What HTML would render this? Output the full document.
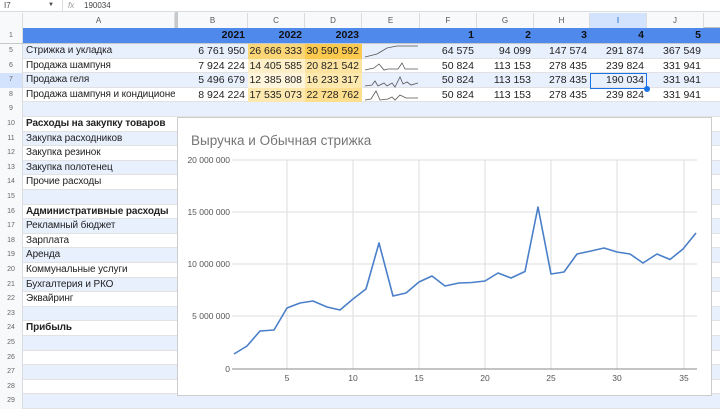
<!DOCTYPE html><html><head><meta charset="utf-8"><style>
*{margin:0;padding:0;box-sizing:border-box}
body{width:720px;height:403px;overflow:hidden;background:#fff;font-family:"Liberation Sans",Arial,sans-serif;position:relative;font-size:10.5px;color:#222}
.a{position:absolute}
.ch{position:absolute;top:13px;height:15px;font-size:8px;color:#555;text-align:center;line-height:15px;border-right:1px solid #dadce0;background:#f8f9fa}
.rn{position:absolute;left:0;width:23px;font-size:7px;color:#666;text-align:center;border-right:1px solid #dadce0}
.n{position:absolute;text-align:right;padding-right:3px;font-size:10.5px;white-space:nowrap}
</style></head><body>
<div class="a" style="left:0;top:0;width:720px;height:12px;border-bottom:1px solid #dadce0;font-size:8px;color:#444;line-height:11px">
<span class="a" style="left:4px;top:0">I7</span><span class="a" style="left:48px;top:0;font-size:6px">▼</span>
<span class="a" style="left:62px;top:-1px;width:1px;height:12px;background:#ddd"></span>
<span class="a" style="left:68px;top:0;color:#999;font-style:italic">fx</span><span class="a" style="left:84px;top:0">190034</span></div>
<div class="a" style="left:0;top:12px;width:720px;height:16px;background:#f8f9fa;border-bottom:1px solid #c0c0c0"></div>
<div class="ch" style="left:0;width:23px"></div>
<div class="ch" style="left:23px;width:152px">A</div>
<div class="a" style="left:175px;top:12px;width:3px;height:391px;background:#c6c9cc"></div>
<div class="ch" style="left:178px;width:70px">B</div>
<div class="ch" style="left:248px;width:57px">C</div>
<div class="ch" style="left:305px;width:57px">D</div>
<div class="ch" style="left:362px;width:58px">E</div>
<div class="ch" style="left:420px;width:57px">F</div>
<div class="ch" style="left:477px;width:57px">G</div>
<div class="ch" style="left:534px;width:56px">H</div>
<div class="ch" style="left:590px;width:57px;background:#d3e3fd;color:#0b57d0">I</div>
<div class="ch" style="left:647px;width:57px">J</div>
<!-- row 1 -->
<div class="a" style="left:23px;top:28px;width:697px;height:15px;background:#5089ec"></div>
<div class="a" style="left:0;top:43px;width:720px;height:2px;background:#c6c9cc"></div>
<div class="rn" style="top:28px;height:15px;line-height:15px;background:#f8f9fa">1</div>
<div id="rows"></div>
<div class="a" style="left:23px;top:28px;width:697px;height:15px;font-weight:bold;font-size:10.5px;line-height:15px;color:#111">
<span class="n" style="left:155px;width:70px">2021</span><span class="n" style="left:225px;width:57px">2022</span><span class="n" style="left:282px;width:57px">2023</span>
<span class="n" style="left:397px;width:57px">1</span><span class="n" style="left:454px;width:57px">2</span><span class="n" style="left:511px;width:56px">3</span><span class="n" style="left:567px;width:57px">4</span><span class="n" style="left:624px;width:57px">5</span></div>
<svg class="a" style="left:177px;top:117px" width="543" height="286">
<rect x="0.5" y="0.5" width="534" height="278" fill="#fff" stroke="#ccc"/>
<text x="14" y="28" font-size="13.5" fill="#757575" font-family="Liberation Sans">Выручка и Обычная стрижка</text>
<g stroke="#ddd" stroke-width="1">
<line x1="55" y1="43" x2="520" y2="43"/><line x1="55" y1="95" x2="520" y2="95"/><line x1="55" y1="147" x2="520" y2="147"/><line x1="55" y1="199" x2="520" y2="199"/>
<line x1="110" y1="43" x2="110" y2="252"/><line x1="176" y1="43" x2="176" y2="252"/><line x1="242" y1="43" x2="242" y2="252"/><line x1="308" y1="43" x2="308" y2="252"/><line x1="374" y1="43" x2="374" y2="252"/><line x1="440" y1="43" x2="440" y2="252"/><line x1="507" y1="43" x2="507" y2="252"/>
</g>
<line x1="55" y1="252" x2="520" y2="252" stroke="#888"/>
<g font-size="8.5" fill="#555" font-family="Liberation Sans" text-anchor="end">
<text x="53" y="46">20 000 000</text><text x="53" y="98">15 000 000</text><text x="53" y="150">10 000 000</text><text x="53" y="202">5 000 000</text><text x="53" y="255">0</text></g>
<g font-size="8.5" fill="#555" font-family="Liberation Sans" text-anchor="middle">
<text x="110" y="264">5</text><text x="176" y="264">10</text><text x="242" y="264">15</text><text x="308" y="264">20</text><text x="374" y="264">25</text><text x="440" y="264">30</text><text x="507" y="264">35</text></g>
<polyline fill="none" stroke="#4a7fc9" stroke-width="1.6" stroke-linejoin="round" points="57,237 70,229 83,214 97,213 110,191 123,186 136,184 150,190 163,193 176,182 189,172 202,126 216,179 229,176 242,165 255,159 268,169 282,166 295,165.5 308,164 321,156 334,161 348,154.5 361,90 374,157 387,155 400,137 414,134 427,131 440,135 453,137 466,146 480,137 493,142.5 506,132 519,116"/>
</svg>
<script>
var h='',blue='#e8f0fe';
var lab={5:'Стрижка и укладка',6:'Продажа шампуня',7:'Продажа геля',8:'Продажа шампуня и кондиционер.',10:'<b>Расходы на закупку товаров</b>',11:'Закупка расходников',12:'Закупка резинок',13:'Закупка полотенец',14:'Прочие расходы',16:'<b>Административные расходы</b>',17:'Рекламный бюджет',18:'Зарплата',19:'Аренда',20:'Коммунальные услуги',21:'Бухгалтерия и РКО',22:'Эквайринг',24:'<b>Прибыль</b>'};
var data={5:['6 761 950','26 666 333','30 590 592','64 575','94 099','147 574','291 874','367 549'],6:['7 924 224','14 405 585','20 821 542','50 824','113 153','278 435','239 824','331 941'],7:['5 496 679','12 385 808','16 233 317','50 824','113 153','278 435','190 034','331 941'],8:['8 924 224','17 535 073','22 728 762','50 824','113 153','278 435','239 824','331 941']};
var cbg={5:['#fbd676','#fcc94f'],6:['#fdf0c8','#fde3a0'],7:['#fef5dc','#fde8ae'],8:['#fde9b0','#fdde8c']};
var xs=[178,248,305,420,477,534,590,647],ws=[70,57,57,57,57,56,57,57];
for(var n=5;n<=29;n++){var t=44+(n-5)*14.6;var bg=(n%2)?blue:'#fff';
h+='<div class="a" style="left:23px;top:'+t+'px;width:697px;height:14.6px;background:'+bg+';border-bottom:1px solid #e2e2e2"></div>';
h+='<div class="rn" style="top:'+t+'px;height:14.6px;line-height:14.6px;background:'+(n==7?'#d3e3fd':'#f8f9fa')+'">'+n+'</div>';
if(n<=8){for(var k=0;k<8;k++){var bgc=(k==1||k==2)?cbg[n][k-1]:'';h+='<div class="n" style="left:'+xs[k]+'px;top:'+t+'px;width:'+ws[k]+'px;height:14.6px;line-height:14.6px;'+(bgc?'background:'+bgc+';':'')+'">'+data[n][k]+'</div>';}}
if(lab[n])h+='<div class="a" style="left:26px;top:'+t+'px;width:149px;overflow:hidden;white-space:nowrap;line-height:14.6px;font-size:10px;letter-spacing:-0.1px">'+lab[n]+'</div>';}
document.getElementById('rows').innerHTML=h;
</script>
<svg class="a" style="left:362px;top:44px" width="58" height="60" fill="none" stroke="#555" stroke-width="0.8">
<polyline points="3,13 15,10 25,4 35,2 56,2"/>
<polyline points="3,26 12,24 17,20 22,26 26,25 36,25 40,19 43,25 56,25"/>
<polyline points="3,42 10,41 13,37 16,42 22,39 25,42 30,39 33,43 38,33 41,40 45,38 49,41 56,39"/>
<polyline points="3,56 9,55 14,47 18,56 26,55 30,53 33,56 38,51 44,54 56,54"/>
</svg>
<div class="a" style="left:590px;top:73px;width:57px;height:16px;border:1.5px solid #1a73e8"></div>
<div class="a" style="left:644px;top:86px;width:6px;height:6px;border-radius:50%;background:#1a73e8"></div>
</body></html>
